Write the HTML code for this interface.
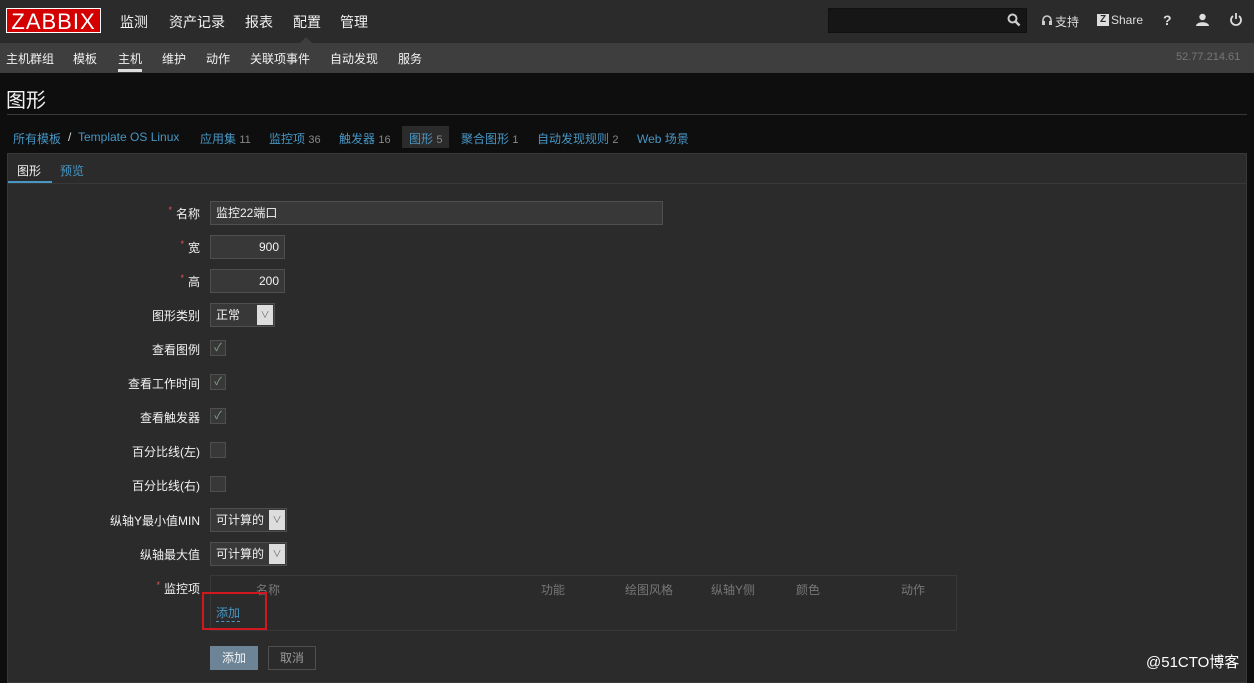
<!DOCTYPE html>
<html><head><meta charset="utf-8"><style>
*{margin:0;padding:0;box-sizing:border-box}
body{width:1254px;height:678px;overflow:hidden;background:#0e0e0e;font-family:"Liberation Sans","Noto Sans CJK SC",sans-serif;font-size:12px;color:#f2f2f2;position:relative}
.a{position:absolute;white-space:nowrap}
.top{left:0;top:0;width:1254px;height:43px;background:#2b2b2b}
.sub{left:0;top:43px;width:1254px;height:30px;background:#3e3e3e}
.logo{left:6px;top:8px;width:95px;height:25px;background:#d40000;color:#fff;font-size:22px;line-height:25px;text-align:center;letter-spacing:1px;border:1px solid #fff}
.mn{top:12px;font-size:14px;color:#f2f2f2}
.sn{top:50px;font-size:12px;color:#f2f2f2}
.bc{top:130px;color:#4796c4;font-size:12px}
.bc i{font-style:normal;color:#888;font-size:11px}
.panel{left:7px;top:153px;width:1240px;height:530px;background:#2b2b2b;border:1px solid #383838}
.lab{right:1054px;font-size:12px;color:#f2f2f2;text-align:right}
.lab b{color:#e45959;font-weight:normal;font-size:9px;vertical-align:top;margin-right:4px}
.inp{background:#383838;border:1px solid #4f4f4f;color:#f2f2f2;padding:0 5px;line-height:22px;height:24px}
.cb{width:16px;height:16px;background:#383838;border:1px solid #4f4f4f;left:210px;color:#7ea88a;font-size:11px;line-height:14px;text-align:center}
.sel{background:#383838;border:1px solid #4f4f4f;height:24px;line-height:22px;padding-left:5px;color:#f2f2f2}
.arr{position:absolute;right:1px;top:1px;width:16px;height:20px;background:#ddd;color:#666;font-size:9px;text-align:center;line-height:20px}
.th{top:581px;color:#777;font-size:12px}
</style></head><body>
<div class="a top"></div>
<div class="a logo">ZABBIX</div>
<div class="a mn" style="left:120px">监测</div>
<div class="a mn" style="left:169px">资产记录</div>
<div class="a mn" style="left:245px">报表</div>
<div class="a mn" style="left:293px">配置</div>
<div class="a mn" style="left:340px">管理</div>
<div class="a" style="left:300px;top:37px;width:0;height:0;border-left:6px solid transparent;border-right:6px solid transparent;border-bottom:6px solid #3e3e3e"></div>
<div class="a" style="left:828px;top:8px;width:199px;height:25px;background:#161616;border:1px solid #111"></div>
<svg class="a" style="left:1007px;top:13px" width="14" height="14"><circle cx="5.5" cy="5.5" r="4" stroke="#ccc" stroke-width="2" fill="none"/><path d="M8.5 8.5L12.5 12.5" stroke="#ccc" stroke-width="2.5"/></svg>
<svg class="a" style="left:1041px;top:14px" width="12" height="12"><path d="M2 8V6a4 4 0 0 1 8 0v2" stroke="#ccc" stroke-width="1.6" fill="none"/><rect x="1" y="7" width="3" height="4" fill="#ccc"/><rect x="8" y="7" width="3" height="4" fill="#ccc"/></svg>
<div class="a" style="left:1055px;top:13px;color:#ddd">支持</div>
<div class="a" style="left:1097px;top:14px;width:12px;height:12px;background:#ddd;color:#2b2b2b;font-size:10px;font-weight:bold;line-height:12px;text-align:center">Z</div>
<div class="a" style="left:1111px;top:13px;color:#ddd">Share</div>
<div class="a" style="left:1163px;top:12px;color:#ddd;font-size:14px;font-weight:bold">?</div>
<svg class="a" style="left:1196px;top:13px" width="13" height="14"><circle cx="6.5" cy="4" r="3.2" fill="#ddd"/><path d="M0 13c0-5 13-5 13 0z" fill="#ddd"/></svg>
<svg class="a" style="left:1229px;top:12px" width="14" height="15"><path d="M4 4a5 5 0 1 0 6 0" stroke="#ddd" stroke-width="1.8" fill="none"/><path d="M7 1v6" stroke="#ddd" stroke-width="1.8"/></svg>
<div class="a sub"></div>
<div class="a sn" style="left:6px">主机群组</div>
<div class="a sn" style="left:73px">模板</div>
<div class="a sn" style="left:118px">主机</div>
<div class="a" style="left:118px;top:69px;width:24px;height:3px;background:#ddd"></div>
<div class="a sn" style="left:162px">维护</div>
<div class="a sn" style="left:206px">动作</div>
<div class="a sn" style="left:250px">关联项事件</div>
<div class="a sn" style="left:330px">自动发现</div>
<div class="a sn" style="left:398px">服务</div>
<div class="a" style="left:1176px;top:51px;color:#777;font-size:11px">52.77.214.61</div>
<div class="a" style="left:6px;top:84px;font-size:20px;color:#f2f2f2">图形</div>
<div class="a" style="left:7px;top:114px;width:1240px;height:1px;background:#383838"></div>
<div class="a" style="left:402px;top:126px;width:47px;height:22px;background:#2b2b2b"></div>
<div class="a bc" style="left:13px">所有模板</div>
<div class="a bc" style="left:68px;color:#ddd">/</div>
<div class="a bc" style="left:78px">Template OS Linux</div>
<div class="a bc" style="left:200px">应用集 <i>11</i></div>
<div class="a bc" style="left:269px">监控项 <i>36</i></div>
<div class="a bc" style="left:339px">触发器 <i>16</i></div>
<div class="a bc" style="left:409px">图形 <i>5</i></div>
<div class="a bc" style="left:461px">聚合图形 <i>1</i></div>
<div class="a bc" style="left:537px">自动发现规则 <i>2</i></div>
<div class="a bc" style="left:637px">Web 场景</div>
<div class="a panel"></div>
<div class="a" style="left:8px;top:154px;width:44px;height:29px;background:#2b2b2b;border-bottom:2px solid #4796c4"></div>
<div class="a" style="left:8px;top:183px;width:1238px;height:1px;background:#383838"></div>
<div class="a" style="left:17px;top:162px">图形</div>
<div class="a" style="left:60px;top:162px;color:#4796c4">预览</div>

<div class="a lab" style="top:205px"><b>*</b>名称</div>
<div class="a inp" style="left:210px;top:201px;width:453px">监控22端口</div>
<div class="a lab" style="top:239px"><b>*</b>宽</div>
<div class="a inp" style="left:210px;top:235px;width:75px;text-align:right">900</div>
<div class="a lab" style="top:273px"><b>*</b>高</div>
<div class="a inp" style="left:210px;top:269px;width:75px;text-align:right">200</div>
<div class="a lab" style="top:307px">图形类别</div>
<div class="a sel" style="left:210px;top:303px;width:65px">正常<span class="arr">∨</span></div>
<div class="a lab" style="top:341px">查看图例</div>
<div class="a cb" style="top:340px">✓</div>
<div class="a lab" style="top:375px">查看工作时间</div>
<div class="a cb" style="top:374px">✓</div>
<div class="a lab" style="top:409px">查看触发器</div>
<div class="a cb" style="top:408px">✓</div>
<div class="a lab" style="top:443px">百分比线(左)</div>
<div class="a cb" style="top:442px"></div>
<div class="a lab" style="top:477px">百分比线(右)</div>
<div class="a cb" style="top:476px"></div>
<div class="a lab" style="top:512px">纵轴Y最小值MIN</div>
<div class="a sel" style="left:210px;top:508px;width:77px">可计算的<span class="arr">∨</span></div>
<div class="a lab" style="top:546px">纵轴最大值</div>
<div class="a sel" style="left:210px;top:542px;width:77px">可计算的<span class="arr">∨</span></div>
<div class="a lab" style="top:580px"><b>*</b>监控项</div>
<div class="a" style="left:210px;top:575px;width:747px;height:56px;border:1px solid #383838"></div>
<div class="a th" style="left:256px">名称</div>
<div class="a th" style="left:541px">功能</div>
<div class="a th" style="left:625px">绘图风格</div>
<div class="a th" style="left:711px">纵轴Y侧</div>
<div class="a th" style="left:796px">颜色</div>
<div class="a th" style="left:901px">动作</div>
<div class="a" style="left:202px;top:592px;width:65px;height:38px;border:2px solid #d0181e"></div>
<div class="a" style="left:216px;top:604px;color:#4796c4;border-bottom:1px dashed #4796c4">添加</div>
<div class="a" style="left:210px;top:646px;width:48px;height:24px;background:#6d8496;color:#f2f2f2;text-align:center;line-height:24px">添加</div>
<div class="a" style="left:268px;top:646px;width:48px;height:24px;border:1px solid #4f4f4f;color:#999;text-align:center;line-height:22px">取消</div>
<div class="a" style="left:1146px;top:651px;color:#fff;font-size:15px">@51CTO博客</div>
</body></html>
